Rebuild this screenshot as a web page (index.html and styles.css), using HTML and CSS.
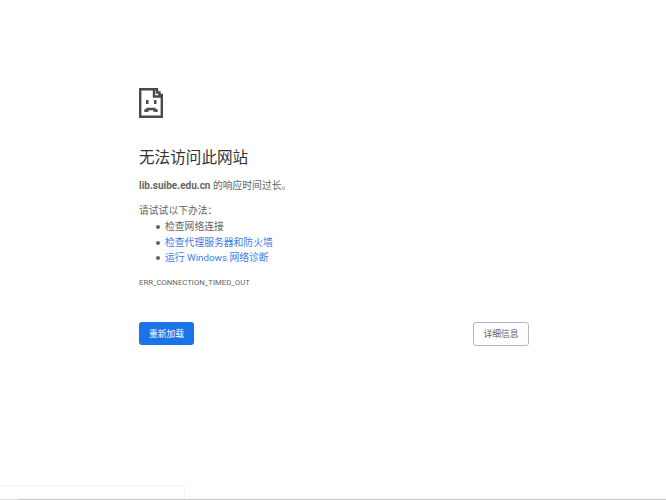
FILE: index.html
```html
<!DOCTYPE html>
<html lang="zh-CN">
<head>
<meta charset="utf-8">
<title>lib.suibe.edu.cn</title>
<link rel="stylesheet" href="styles.css">
</head>
<body>
<main class="page">
  <svg class="sad-icon" width="24" height="30" viewBox="0 0 24 30" aria-hidden="true">
    <path class="sad-line" d="M1.2 1.2H15V8.5H22.8V28.8H1.2Z"/>
    <path class="sad-line" d="M15 1.2H18V4.5H20.5V7H22.8V9"/>
    <rect class="sad-fill" x="7" y="12" width="2.5" height="4"/>
    <rect class="sad-fill" x="15" y="12" width="2.5" height="4"/>
    <path class="sad-line" d="M6.5 24V22.5H8.5V21H15.5V22.5H17.5V24"/>
  </svg>
  <h1 class="title">无法访问此网站</h1>
  <p class="summary"><strong>lib.suibe.edu.cn</strong> 的响应时间过长。</p>
  <p class="try">请试试以下办法：</p>
  <ul class="suggestions">
    <li>检查网络连接</li>
    <li><a href="#">检查代理服务器和防火墙</a></li>
    <li><a href="#">运行 Windows 网络诊断</a></li>
  </ul>
  <div class="code">ERR_CONNECTION_TIMED_OUT</div>
  <div class="buttons">
    <button class="btn primary">重新加载</button>
    <button class="btn secondary">详细信息</button>
  </div>
</main>
<div class="status-bubble"></div>
<div class="bottom-line"></div>
</body>
</html>
```
FILE: styles.css
```css
html, body {
  margin: 0;
  height: 100%;
  background: #fff;
}
body {
  position: relative;
  overflow: hidden;
  font-family: Roboto, "Noto Sans CJK SC", sans-serif;
  font-size: 9.8px;
  color: #646464;
}
.page {
  box-sizing: border-box;
  width: 390px;
  margin-left: 139px;
  padding-top: 88px;
}
.sad-icon {
  display: block;
}
.sad-line {
  fill: none;
  stroke: #4a4a4a;
  stroke-width: 2.4;
}
.sad-fill {
  fill: #4a4a4a;
}
.title {
  margin: 30px 0 0;
  font-size: 15.6px;
  line-height: 20px;
  font-weight: 400;
  color: #333;
}
.summary {
  margin: 10px 0 0;
  line-height: 15px;
}
.summary strong {
  font-size: 10px;
  font-weight: 700;
}
.try {
  margin: 10px 0 0;
  line-height: 16px;
}
.suggestions {
  margin: 0;
  padding: 0 0 0 26px;
  list-style: none;
}
.suggestions li {
  position: relative;
  line-height: 15.5px;
}
.suggestions li::before {
  content: "";
  position: absolute;
  left: -9px;
  top: 6px;
  width: 4px;
  height: 4px;
  border-radius: 50%;
  background: #646464;
}
.suggestions a {
  color: #3b7de8;
  text-decoration: none;
}
.code {
  margin-top: 11px;
  font-size: 7.75px;
  line-height: 11px;
  color: #646464;
}
.buttons {
  display: flex;
  justify-content: space-between;
  align-items: flex-start;
  margin-top: 34px;
}
.btn {
  box-sizing: border-box;
  padding: 0;
  border-radius: 3px;
  font-family: inherit;
  font-size: 8.8px;
}
.primary {
  width: 55px;
  height: 23px;
  border: 0;
  background: #1a73e8;
  color: #fff;
}
.secondary {
  width: 56px;
  height: 24px;
  border: 1px solid #b8b8b8;
  background: #fff;
  color: #5f6368;
}
.status-bubble {
  position: absolute;
  left: 0;
  bottom: 1px;
  width: 185px;
  height: 14px;
  box-sizing: border-box;
  border-top: 1px solid #f4f4f4;
  border-right: 1px solid #f4f4f4;
  border-top-right-radius: 2px;
}
.bottom-line {
  position: absolute;
  left: 0;
  right: 0;
  bottom: 0;
  height: 1px;
  background: linear-gradient(to right, #e0e0e0 18px, #c8c8c8 18px);
}
```
